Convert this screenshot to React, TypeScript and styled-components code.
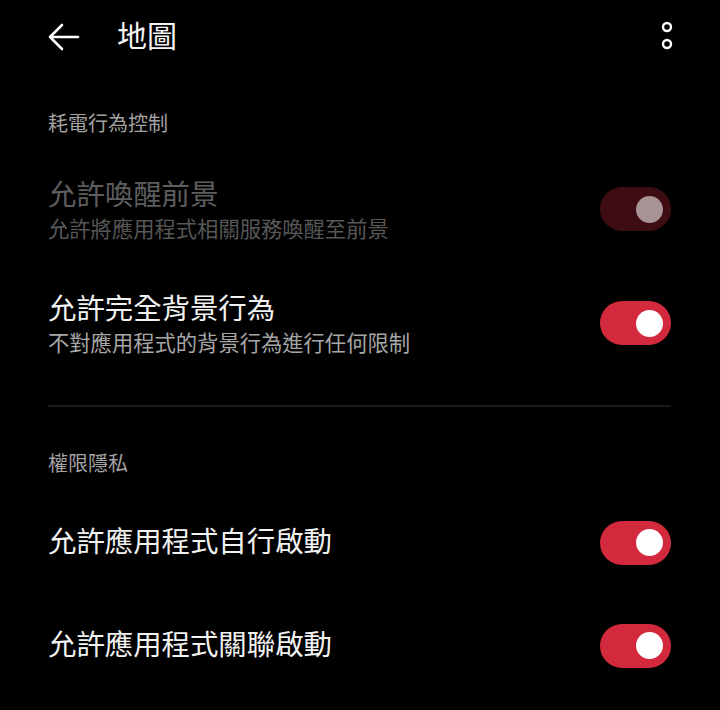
import React from 'react'
import styled, { createGlobalStyle } from 'styled-components'

const GlobalStyle = createGlobalStyle`
  html, body {
    margin: 0;
    padding: 0;
    background: #000;
  }
  body {
    font-family: "Noto Sans CJK TC", "Noto Sans", sans-serif;
    -webkit-font-smoothing: antialiased;
  }
`

type Item = { title: string; sub?: string; on: boolean; disabled?: boolean }

const power: Item[] = [
  { title: '允許喚醒前景', sub: '允許將應用程式相關服務喚醒至前景', on: true, disabled: true },
  { title: '允許完全背景行為', sub: '不對應用程式的背景行為進行任何限制', on: true },
]

const privacy: Item[] = [
  { title: '允許應用程式自行啟動', on: true },
  { title: '允許應用程式關聯啟動', on: true },
]

export default function App() {
  return (
    <Screen>
      <GlobalStyle />
      <TopBar>
        <IconButton aria-label="back">
          <svg width="36" height="36" viewBox="0 0 36 36" fill="none">
            <path d="M33 18H5M17 6L5 18l12 12" stroke="#fff" strokeWidth="2.6" strokeLinecap="round" strokeLinejoin="round" />
          </svg>
        </IconButton>
        <PageTitle>地圖</PageTitle>
        <MoreButton aria-label="more">
          <svg width="14" height="30" viewBox="0 0 14 30" fill="none">
            <circle cx="7" cy="7" r="4" stroke="#fff" strokeWidth="2.4" />
            <circle cx="7" cy="24" r="4" stroke="#fff" strokeWidth="2.4" />
          </svg>
        </MoreButton>
      </TopBar>

      <SectionLabel>耗電行為控制</SectionLabel>
      {power.map((it) => (
        <Row key={it.title} $tall>
          <TextBlock>
            <RowTitle $disabled={it.disabled}>{it.title}</RowTitle>
            {it.sub && <RowSub $disabled={it.disabled}>{it.sub}</RowSub>}
          </TextBlock>
          <Toggle $on={it.on} $disabled={it.disabled}>
            <Knob $disabled={it.disabled} />
          </Toggle>
        </Row>
      ))}

      <Divider />

      <SectionLabel $second>權限隱私</SectionLabel>
      {privacy.map((it) => (
        <Row key={it.title}>
          <TextBlock $shift>
            <RowTitle>{it.title}</RowTitle>
          </TextBlock>
          <Toggle $on={it.on}>
            <Knob />
          </Toggle>
        </Row>
      ))}
    </Screen>
  )
}

const Screen = styled.div`
  width: 720px;
  height: 710px;
  background: #000;
  overflow: hidden;
  color: #f2f2f2;
`

const TopBar = styled.div`
  height: 74px;
  display: flex;
  align-items: center;
  padding: 0 40px 0 45px;
  box-sizing: border-box;
`

const IconButton = styled.div`
  width: 36px;
  height: 36px;
  display: flex;
  align-items: center;
  justify-content: center;
`

const PageTitle = styled.div`
  margin-left: 36px;
  margin-top: -6px;
  font-size: 30px;
  line-height: 40px;
  color: #f5f5f5;
  flex: 1;
`

const MoreButton = styled.div`
  display: flex;
  align-items: center;
  margin-right: 6px;
  margin-top: -4px;
`

const SectionLabel = styled.div<{ $second?: boolean }>`
  padding: ${(p) => (p.$second ? '42px 48px 14px' : '35px 48px 15px')};
  font-size: 20px;
  line-height: 28px;
  color: #a3a3a3;
`

const Row = styled.div<{ $tall?: boolean }>`
  height: ${(p) => (p.$tall ? '114px' : '103px')};
  display: flex;
  align-items: center;
  justify-content: space-between;
  padding: 0 49px 0 48px;
  box-sizing: border-box;
`

const TextBlock = styled.div<{ $shift?: boolean }>`
  display: flex;
  flex-direction: column;
  gap: 4px;
  margin-top: ${(p) => (p.$shift ? '-5px' : '0')};
`

const RowTitle = styled.div<{ $disabled?: boolean }>`
  font-size: 28.4px;
  line-height: 34px;
  color: ${(p) => (p.$disabled ? '#5e5e5e' : '#f2f2f2')};
`

const RowSub = styled.div<{ $disabled?: boolean }>`
  font-size: 21.3px;
  line-height: 28px;
  color: ${(p) => (p.$disabled ? '#575757' : '#a6a6a6')};
`

const Toggle = styled.div<{ $on: boolean; $disabled?: boolean }>`
  width: 71px;
  height: 44px;
  border-radius: 22px;
  background: ${(p) => (p.$disabled ? '#3e0d13' : p.$on ? '#d22a3c' : '#555')};
  display: flex;
  align-items: center;
  justify-content: ${(p) => (p.$on ? 'flex-end' : 'flex-start')};
  padding: 0 8px;
  box-sizing: border-box;
`

const Knob = styled.div<{ $disabled?: boolean }>`
  width: 27px;
  height: 27px;
  border-radius: 50%;
  background: ${(p) => (p.$disabled ? '#a89496' : '#ffffff')};
`

const Divider = styled.div`
  height: 2px;
  margin: 25px 49px 0 48px;
  background: #1a1a1a;
`
